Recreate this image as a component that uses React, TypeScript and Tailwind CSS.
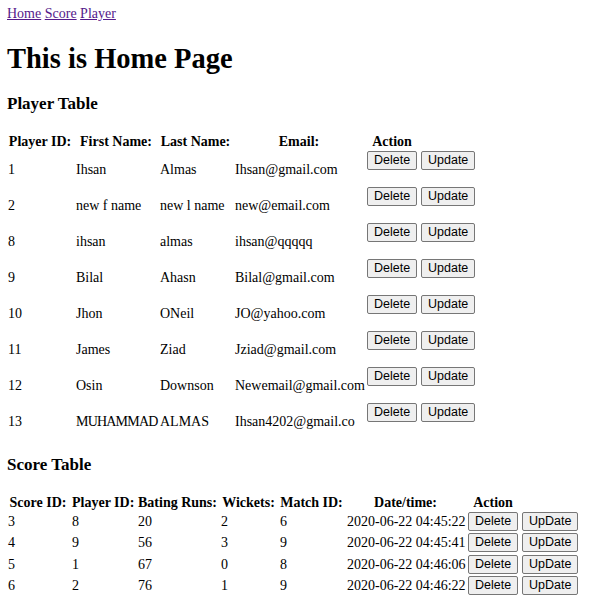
const players = [
  { id: 1, first: 'Ihsan', last: 'Almas', email: 'Ihsan@gmail.com' },
  { id: 2, first: 'new f name', last: 'new l name', email: 'new@email.com' },
  { id: 8, first: 'ihsan', last: 'almas', email: 'ihsan@qqqqq' },
  { id: 9, first: 'Bilal', last: 'Ahasn', email: 'Bilal@gmail.com' },
  { id: 10, first: 'Jhon', last: 'ONeil', email: 'JO@yahoo.com' },
  { id: 11, first: 'James', last: 'Ziad', email: 'Jziad@gmail.com' },
  { id: 12, first: 'Osin', last: 'Downson', email: 'Newemail@gmail.com' },
  { id: 13, first: 'MUHAMMAD', last: 'ALMAS', email: 'Ihsan4202@gmail.co', caps: true },
];

const scores = [
  { id: 3, player: 8, runs: 20, wickets: 2, match: 6, date: '2020-06-22 04:45:22' },
  { id: 4, player: 9, runs: 56, wickets: 3, match: 9, date: '2020-06-22 04:45:41' },
  { id: 5, player: 1, runs: 67, wickets: 0, match: 8, date: '2020-06-22 04:46:06' },
  { id: 6, player: 2, runs: 76, wickets: 1, match: 9, date: '2020-06-22 04:46:22' },
];

function Btn({ label }: { label: string }) {
  return (
    <button className="block h-[19px] px-[6px] border border-[#767676] rounded-[2px] bg-[#efefef] text-[12.5px] leading-[15px] text-black whitespace-nowrap font-['Liberation_Sans',Arial,sans-serif]">
      {label}
    </button>
  );
}

export default function App() {
  return (
    <div className="px-[7px] pt-[5px] pb-4 font-['Liberation_Serif','Times_New_Roman',serif] text-[14px] text-black bg-white min-h-screen">
      <div className="leading-[18px]">
        <a href="#" className="text-[#551a8b] underline">Home</a>{' '}
        <a href="#" className="text-[#551a8b] underline">Score</a>{' '}
        <a href="#" className="text-[#551a8b] underline">Player</a>
      </div>

      <h1 className="mt-[19px] text-[28.5px] leading-[34px] font-bold">This is Home Page</h1>

      <h3 className="mt-[18px] text-[17px] leading-[20px] font-bold">Player Table</h3>

      <table className="mt-[16px] w-[473px] table-fixed border-separate border-spacing-[2px] -ml-[2px] whitespace-nowrap">
        <thead>
          <tr className="h-[15px]">
            <th className="w-[66px] pt-[4px] pb-0 px-px leading-[12px] text-center font-bold">Player ID:</th>
            <th className="w-[82px] pt-[4px] pb-0 px-px leading-[12px] text-center font-bold">First Name:</th>
            <th className="w-[73px] pt-[4px] pb-0 px-px leading-[12px] text-center font-bold">Last Name:</th>
            <th className="w-[130px] pt-[4px] pb-0 px-px leading-[12px] text-center font-bold">Email:</th>
            <th className="w-[52px] pt-[4px] pb-0 px-px leading-[12px] text-center font-bold">Action</th>
            <th className="w-[56px] p-px"></th>
          </tr>
        </thead>
        <tbody>
          {players.map((p) => (
            <tr key={p.id} className="h-[34px]">
              <td className="pt-[6px] pb-px px-px align-middle">{p.id}</td>
              <td className={`pt-[6px] pb-px px-px align-middle ${p.caps ? 'tracking-[-0.8px]' : ''}`}>{p.first}</td>
              <td className="pt-[6px] pb-px px-px align-middle">{p.last}</td>
              <td className="pt-[6px] pb-px px-px align-middle">{p.email}</td>
              <td className="p-px align-top"><Btn label="Delete" /></td>
              <td className="p-px align-top"><Btn label="Update" /></td>
            </tr>
          ))}
        </tbody>
      </table>

      <h3 className="mt-[17px] text-[17px] leading-[20px] font-bold">Score Table</h3>

      <table className="mt-[19px] w-[575px] table-fixed border-separate border-spacing-x-[2px] border-spacing-y-0 -ml-[2px] whitespace-nowrap">
        <thead>
          <tr className="h-[17px] leading-[17px]">
            <th className="w-[62px] px-px text-center font-bold">Score ID:</th>
            <th className="w-[64px] px-px text-center font-bold">Player ID:</th>
            <th className="w-[81px] px-px text-center font-bold">Bating Runs:</th>
            <th className="w-[57px] px-px text-center font-bold">Wickets:</th>
            <th className="w-[65px] px-px text-center font-bold">Match ID:</th>
            <th className="w-[119px] px-px text-center font-bold">Date/time:</th>
            <th className="w-[52px] px-px text-center font-bold">Action</th>
            <th className="w-[57px] px-px"></th>
          </tr>
        </thead>
        <tbody>
          {scores.map((s) => (
            <tr key={s.id} className="h-[21.33px]">
              <td className="px-px">{s.id}</td>
              <td className="px-px">{s.player}</td>
              <td className="px-px">{s.runs}</td>
              <td className="px-px">{s.wickets}</td>
              <td className="px-px">{s.match}</td>
              <td className="px-px">{s.date}</td>
              <td className="px-px"><Btn label="Delete" /></td>
              <td className="px-px"><Btn label="UpDate" /></td>
            </tr>
          ))}
        </tbody>
      </table>
    </div>
  );
}
